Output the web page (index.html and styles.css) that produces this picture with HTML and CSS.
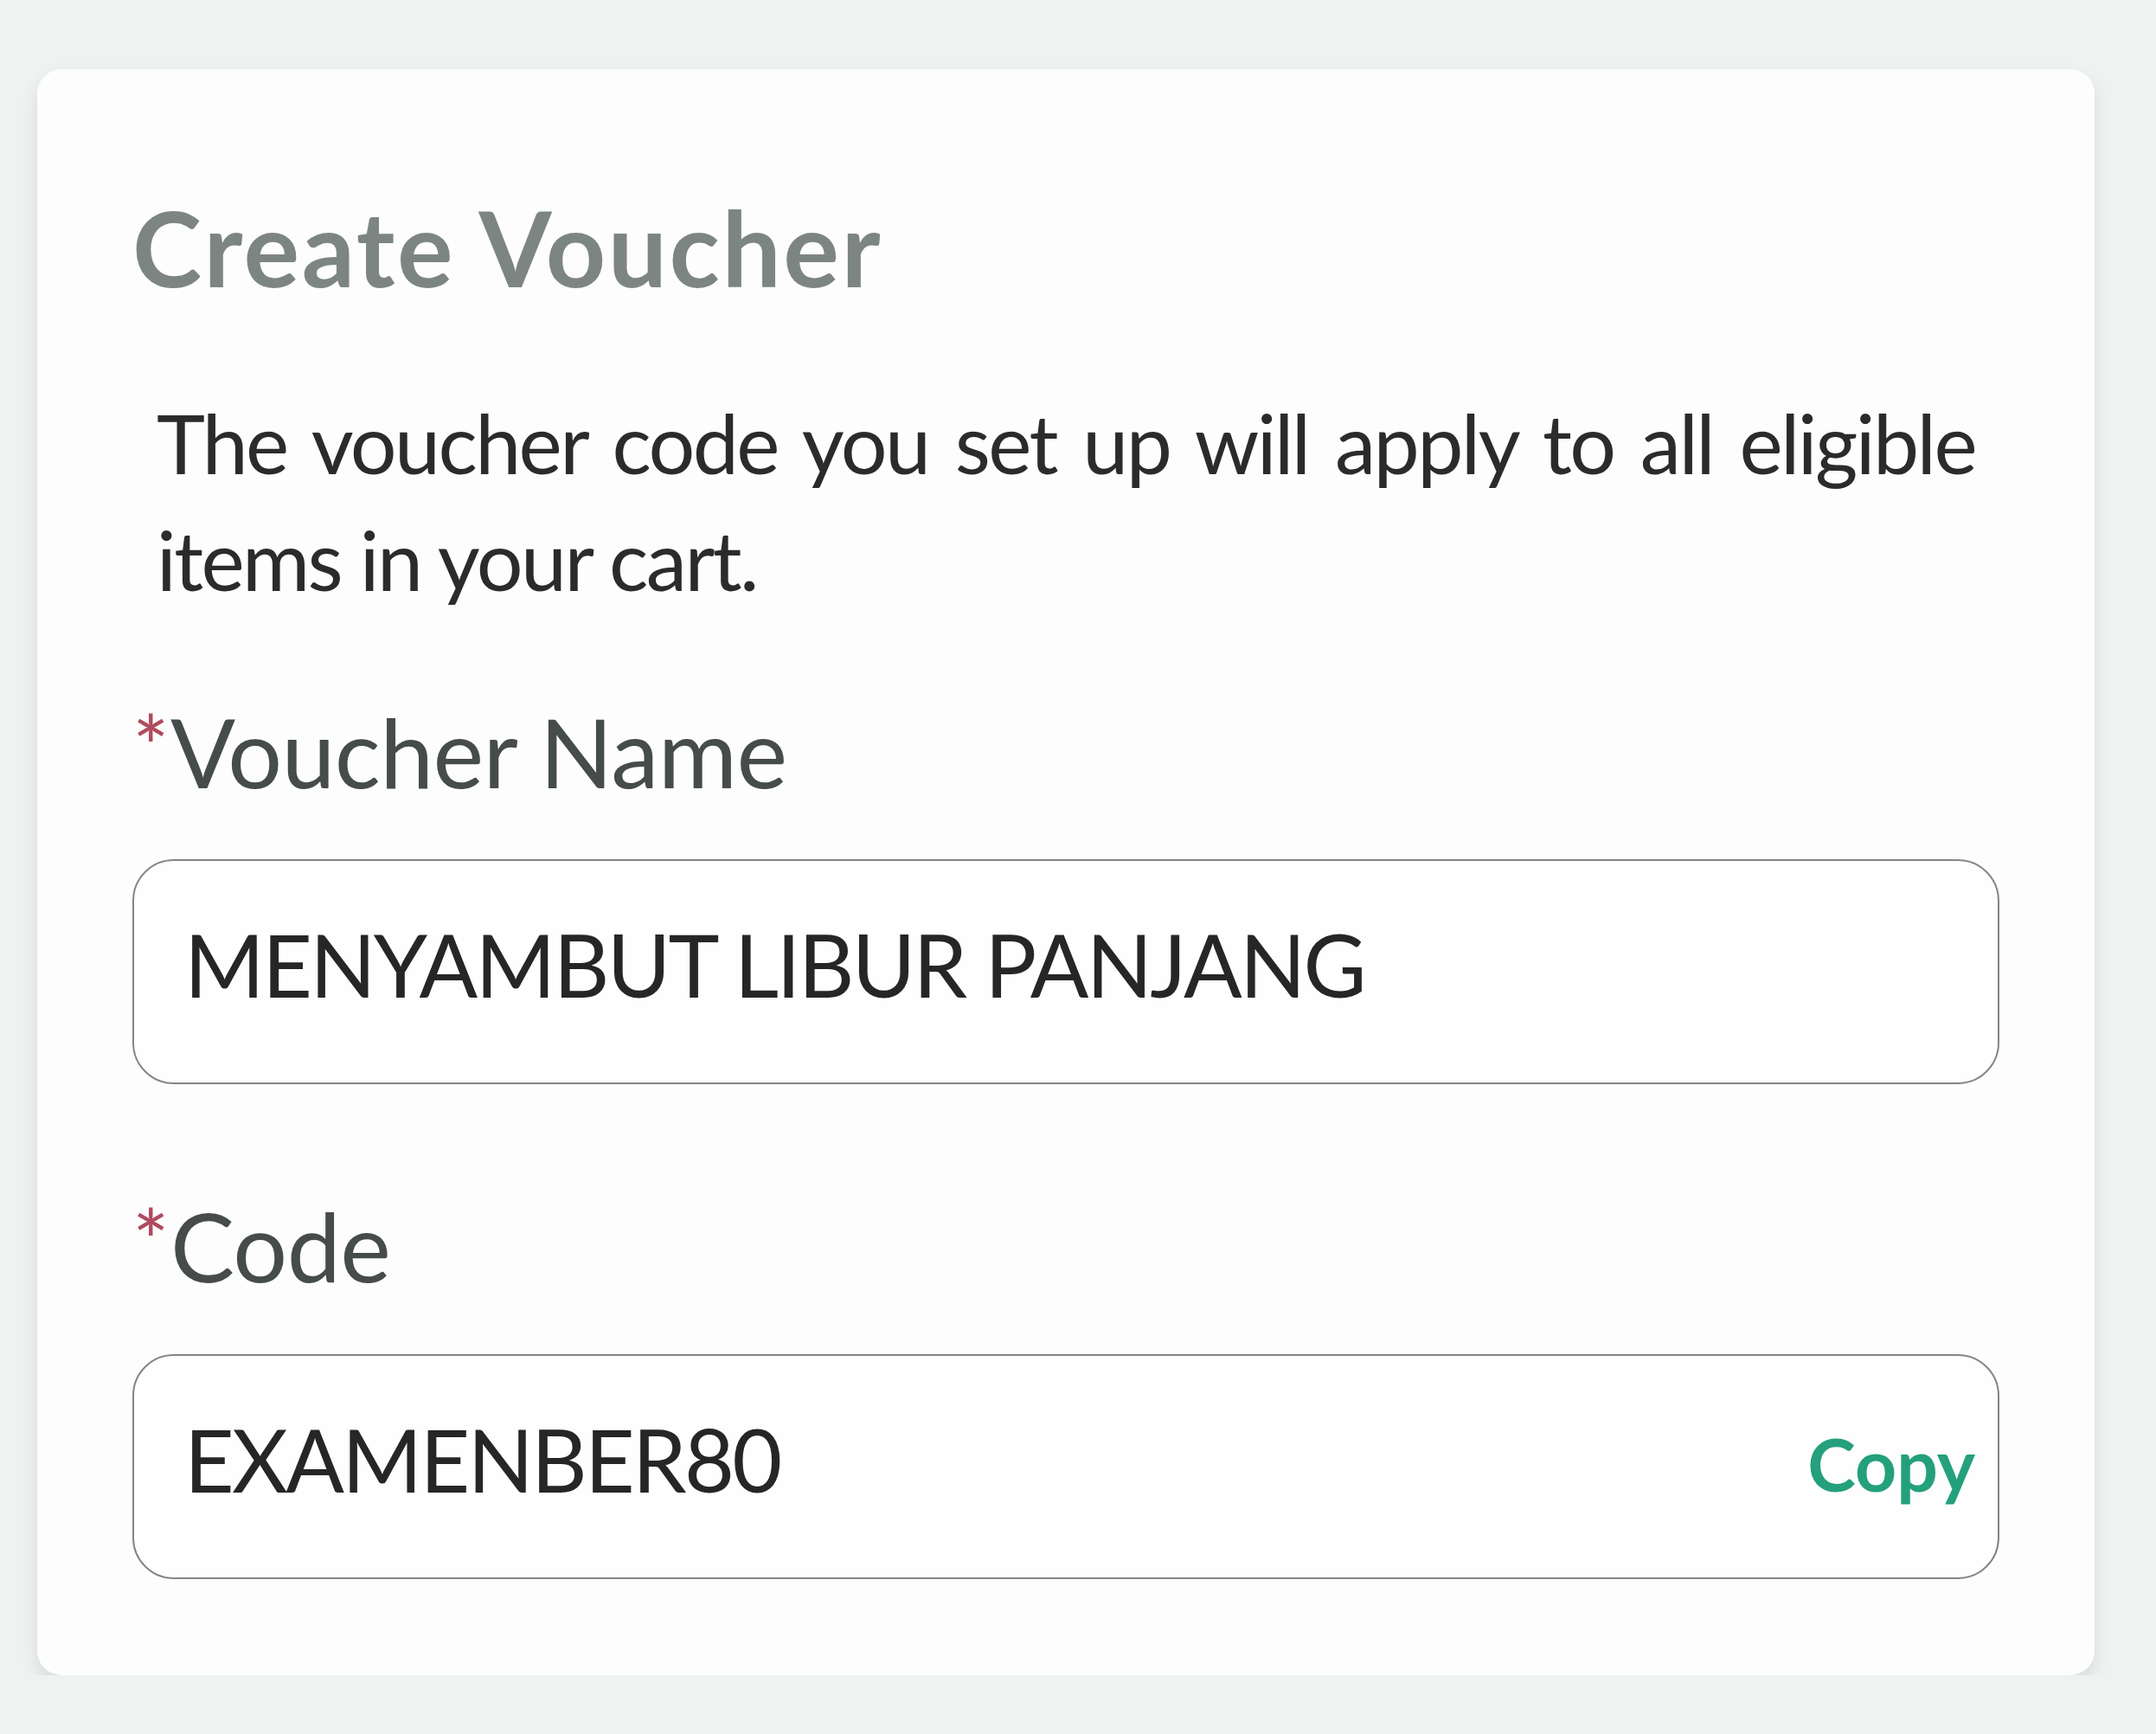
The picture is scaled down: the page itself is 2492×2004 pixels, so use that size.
FILE: index.html
```html
<!DOCTYPE html>
<html lang="en">
<head>
  <meta charset="UTF-8">
  <title>Create Voucher</title>
  <link rel="stylesheet" href="styles.css">
</head>
<body>

  <!-- Kartu voucher -->
  <div class="card">
    <h1 class="title">Create Voucher</h1>

    <p class="desc">The voucher code you set up will apply to all eligible items in your cart.</p>

    <div class="field">
      <label class="label"><span class="req">*</span>Voucher Name</label>
      <div class="input">
        <span class="value">MENYAMBUT LIBUR PANJANG</span>
      </div>
    </div>

    <div class="field">
      <label class="label"><span class="req">*</span>Code</label>
      <div class="input">
        <span class="value">EXAMENBER80</span>
        <span class="copy">Copy</span>
      </div>
    </div>
  </div>

</body>
</html>
```

FILE: styles.css
```css
body {
  margin: 0;
  font-family: Lato, "Open Sans", sans-serif;
  background-color: #eef3f1;
  color: #2a2a2a;
}

/* Kartu */
.card {
  margin: 80px 0 0 43px;
  width: 2378px;
  height: 1856px;
  box-sizing: border-box;
  padding: 133px 110px 0 110px;
  background-color: #fcfdfc;
  border-radius: 28px;
  box-shadow: 0 10px 20px rgba(0, 0, 0, 0.1);
}

.title {
  margin: 0;
  font-size: 121px;
  font-weight: 700;
  line-height: 1.2;
  letter-spacing: 2.6px;
  color: #7d8583;
}

.desc {
  margin: 86px 28px 0 28px;
  font-size: 95px;
  line-height: 135px;
  letter-spacing: -2.6px;
  text-align: justify;
  color: #2b2b2b;
}

/* Field */
.field {
  margin-top: 88px;
}

.field + .field {
  margin-top: 120px;
}

.label {
  display: block;
  font-size: 111px;
  line-height: 1.2;
  letter-spacing: -0.6px;
  color: #464b4b;
}

.req {
  color: #b04a5e;
  font-size: 100px;
  vertical-align: top;
  line-height: 1;
  position: relative;
  top: 10px;
  margin-right: 2px;
}

.input {
  margin-top: 58px;
  height: 260px;
  box-sizing: border-box;
  border: 2px solid #858585;
  border-radius: 48px;
  padding: 0 26px 18px 58px;
  display: flex;
  align-items: center;
  justify-content: space-between;
  background-color: #fdfefd;
}

.value {
  font-size: 100px;
  line-height: 1.2;
  letter-spacing: -2.7px;
  color: #262626;
}

.copy {
  font-size: 84px;
  font-weight: 700;
  line-height: 1.2;
  color: #24a07c;
  padding-top: 14px;
}
```
